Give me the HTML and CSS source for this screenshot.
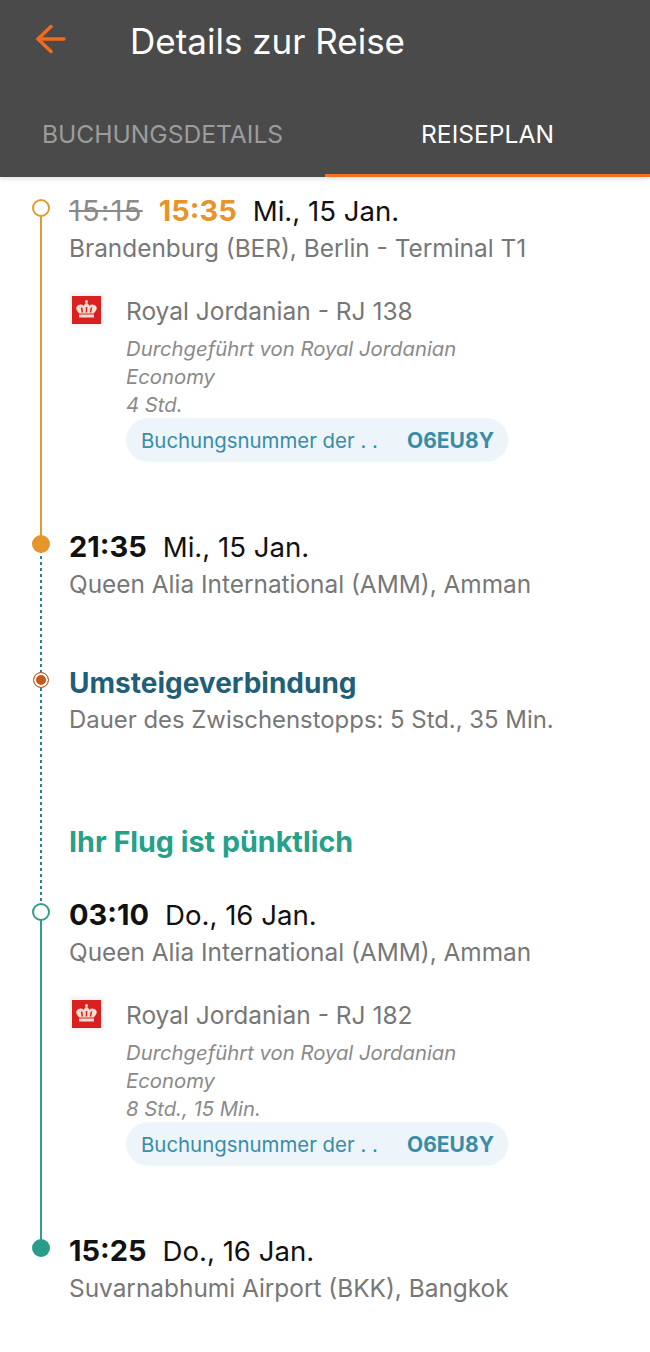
FILE: index.html
```html
<!DOCTYPE html>
<html lang="de">
<head>
    <meta charset="UTF-8">
    <meta name="viewport" content="width=device-width, initial-scale=1.0">
    <title>Details zur Reise</title>
    <link rel="stylesheet" href="styles.css">
</head>
<body>
    <header class="header">
        <div class="title-bar">
            <svg class="back-icon" width="32" height="32" viewBox="0 0 32 32" fill="none" stroke="#f26a1b" stroke-width="3.500" stroke-linecap="round" stroke-linejoin="round">
                <path d="M3 16H29"></path>
                <path d="M16 3.500L3 16L16 28.500"></path>
            </svg>
            <h1 class="title">Details zur Reise</h1>
        </div>
        <nav class="tabs">
            <div class="tab">BUCHUNGSDETAILS</div>
            <div class="tab tab-active">REISEPLAN</div>
        </nav>
    </header>

    <main class="route">
        <section class="leg leg-orange">
            <div class="stop">
                <span class="dot dot-open"></span>
                <div class="time-row">
                    <s class="time-old">15:15</s>
                    <strong class="time time-late">15:35</strong>
                    <span class="date">Mi., 15 Jan.</span>
                </div>
                <div class="place">Brandenburg (BER), Berlin - Terminal T1</div>
            </div>
            <div class="flight">
                <svg class="airline-logo" width="36" height="36" viewBox="0 0 36 36">
                    <rect x="0.500" y="0.500" width="35" height="35" rx="3" fill="#f7f5f7"></rect>
                    <rect x="3" y="4" width="29" height="28" fill="#d8201f"></rect>
                    <path d="M7.500 15C9.500 12 13 12 14.500 14C15.500 12 16.500 11 17.500 11C18.500 11 19.500 12 20.500 14C22 12 25.500 12 27.500 15C28.500 17.500 26 20 24.500 21.500H10.500C9 20 6.500 17.500 7.500 15Z" fill="#f9dcd4"></path>
                    <rect x="10" y="22.500" width="15" height="3" fill="#f9dcd4"></rect>
                    <path d="M12.500 15.500L13.500 20.500M17.500 15L17.500 20.500M22.500 15.500L21.500 20.500" stroke="#d8201f" stroke-width="1.500"></path>
                    <circle cx="17.500" cy="9.500" r="1.500" fill="#f9dcd4"></circle>
                </svg>
                <div class="flight-info">
                    <div class="flight-name">Royal Jordanian - RJ 138</div>
                    <div class="flight-meta">Durchgeführt von Royal Jordanian</div>
                    <div class="flight-meta">Economy</div>
                    <div class="flight-meta">4 Std.</div>
                    <div class="booking-pill">
                        <span>Buchungsnummer der . .</span>
                        <strong class="booking-code">O6EU8Y</strong>
                    </div>
                </div>
            </div>
        </section>

        <section class="layover">
            <div class="stop">
                <span class="dot dot-filled"></span>
                <div class="time-row">
                    <strong class="time">21:35</strong>
                    <span class="date">Mi., 15 Jan.</span>
                </div>
                <div class="place">Queen Alia International (AMM), Amman</div>
            </div>
            <div class="transfer">
                <span class="dot dot-transfer"></span>
                <div class="transfer-title">Umsteigeverbindung</div>
                <div class="place place-note">Dauer des Zwischenstopps: 5 Std., 35 Min.</div>
            </div>
            <div class="on-time">Ihr Flug ist pünktlich</div>
        </section>

        <section class="leg leg-green">
            <div class="stop">
                <span class="dot dot-open"></span>
                <div class="time-row">
                    <strong class="time">03:10</strong>
                    <span class="date">Do., 16 Jan.</span>
                </div>
                <div class="place">Queen Alia International (AMM), Amman</div>
            </div>
            <div class="flight">
                <svg class="airline-logo" width="36" height="36" viewBox="0 0 36 36">
                    <rect x="0.500" y="0.500" width="35" height="35" rx="3" fill="#f7f5f7"></rect>
                    <rect x="3" y="4" width="29" height="28" fill="#d8201f"></rect>
                    <path d="M7.500 15C9.500 12 13 12 14.500 14C15.500 12 16.500 11 17.500 11C18.500 11 19.500 12 20.500 14C22 12 25.500 12 27.500 15C28.500 17.500 26 20 24.500 21.500H10.500C9 20 6.500 17.500 7.500 15Z" fill="#f9dcd4"></path>
                    <rect x="10" y="22.500" width="15" height="3" fill="#f9dcd4"></rect>
                    <path d="M12.500 15.500L13.500 20.500M17.500 15L17.500 20.500M22.500 15.500L21.500 20.500" stroke="#d8201f" stroke-width="1.500"></path>
                    <circle cx="17.500" cy="9.500" r="1.500" fill="#f9dcd4"></circle>
                </svg>
                <div class="flight-info">
                    <div class="flight-name">Royal Jordanian - RJ 182</div>
                    <div class="flight-meta">Durchgeführt von Royal Jordanian</div>
                    <div class="flight-meta">Economy</div>
                    <div class="flight-meta">8 Std., 15 Min.</div>
                    <div class="booking-pill">
                        <span>Buchungsnummer der . .</span>
                        <strong class="booking-code">O6EU8Y</strong>
                    </div>
                </div>
            </div>
        </section>

        <section class="stop stop-last">
            <span class="dot dot-filled"></span>
            <div class="time-row">
                <strong class="time">15:25</strong>
                <span class="date">Do., 16 Jan.</span>
            </div>
            <div class="place">Suvarnabhumi Airport (BKK), Bangkok</div>
        </section>
    </main>
</body>
</html>
```

FILE: styles.css
```css
* {
    box-sizing: border-box;
}

body {
    margin: 0;
    font-family: Inter, Roboto, sans-serif;
    background-color: #fff;
}

.header {
    height: 177px;
    background-color: #4a4a4a;
    box-shadow: 0 2px 5px rgba(0, 0, 0, 0.12);
    display: flex;
    flex-direction: column;
}

.title-bar {
    height: 112px;
    padding: 23px 0 0 35px;
    display: flex;
    align-items: flex-start;
}

.back-icon {
    flex: none;
}

.title {
    margin: -1px 0 0 63px;
    font-size: 35px;
    line-height: 38px;
    font-weight: 400;
    color: #fff;
}

.tabs {
    flex: 1;
    display: grid;
    grid-template-columns: 1fr 1fr;
}

.tab {
    padding-top: 5px;
    text-align: center;
    font-size: 24.6px;
    line-height: 34px;
    color: #9c9c9c;
}

.tab-active {
    color: #fff;
    border-bottom: 3px solid #f36f21;
}

.route {
    padding: 16px 0 0 69px;
}

.leg,
.layover {
    position: relative;
}

.leg::before,
.layover::before {
    content: "";
    position: absolute;
    left: -29px;
    top: 15px;
    width: 2px;
}

.leg::before {
    bottom: -15px;
}

.leg-orange::before {
    background-color: #e59a2f;
}

.leg-green::before {
    background-color: #2f9f8c;
}

.layover::before {
    bottom: -9px;
    background-image: repeating-linear-gradient(to bottom, #2f7f96 0, #2f7f96 3px, transparent 3px, transparent 6px);
}

.leg {
    padding-bottom: 67px;
}

.stop,
.transfer {
    position: relative;
}

.stop-last {
    padding-bottom: 46px;
}

.dot {
    position: absolute;
    z-index: 1;
    border-radius: 50%;
}

.dot-open {
    left: -37px;
    top: 6px;
    width: 18px;
    height: 18px;
    border: 2px solid #e59a2f;
    background-color: #fff;
}

.leg-green .dot-open {
    border-color: #2f9f8c;
}

.dot-filled {
    left: -37px;
    top: 6px;
    width: 18px;
    height: 18px;
    background-color: #e5952a;
}

.stop-last .dot-filled {
    background-color: #2a9d8a;
}

.dot-transfer {
    left: -36px;
    top: 7px;
    width: 16px;
    height: 16px;
    border: 1.5px solid #b9622a;
    background-color: #c4591a;
    box-shadow: inset 0 0 0 2px #fff;
}

.time-row {
    display: flex;
    align-items: baseline;
    gap: 16px;
    height: 37px;
    line-height: 36px;
}

.time {
    font-size: 29px;
    font-weight: 700;
    color: #111;
}

.time-late {
    color: #e5952a;
}

.time-old {
    font-size: 29px;
    letter-spacing: 1.300px;
    color: #8a8a8a;
}

.date {
    font-size: 27.6px;
    color: #111;
}

.place {
    font-size: 24.4px;
    line-height: 37px;
    color: #777;
}

.place-note {
    font-size: 23.9px;
}

.flight {
    margin-top: 27px;
    display: flex;
    align-items: flex-start;
    gap: 21px;
}

.airline-logo {
    flex: none;
    margin-top: -2px;
}

.flight-info {
    flex: 1;
}

.flight-name {
    font-size: 24.5px;
    line-height: 34px;
    color: #777;
}

.flight-meta {
    font-size: 20.3px;
    line-height: 28px;
    font-style: italic;
    color: #8a8a8a;
}

.flight-name + .flight-meta {
    margin-top: 7px;
}

.booking-pill {
    width: 382px;
    height: 44px;
    margin-top: -1px;
    padding: 0 14px 0 15px;
    border-radius: 22px;
    background-color: #edf5fa;
    display: flex;
    align-items: center;
    justify-content: space-between;
    font-size: 20.4px;
    color: #3a8ca8;
}

.booking-code {
    font-size: 21px;
    font-weight: 700;
}

.transfer {
    margin-top: 62px;
}

.transfer-title {
    font-size: 28px;
    line-height: 36px;
    font-weight: 700;
    color: #1f5f7a;
}

.on-time {
    margin-top: 86px;
    padding-bottom: 37px;
    font-size: 28.7px;
    line-height: 36px;
    font-weight: 700;
    color: #27a08a;
}
```
